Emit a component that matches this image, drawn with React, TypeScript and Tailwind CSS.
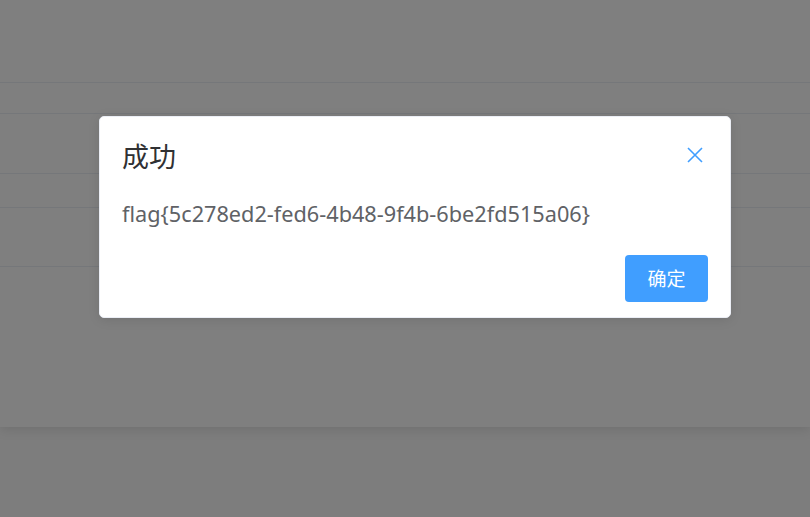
import React from "react";

export default function App() {
  const rows = [83, 31, 60, 34, 59];
  return (
    <div
      className="relative w-full h-[517px] overflow-hidden bg-[#fafafa]"
      style={{ fontFamily: '"Noto Sans", "Noto Sans CJK SC", sans-serif' }}
    >
      <div className="h-[427px] bg-white shadow-[0_2px_12px_rgba(0,0,0,0.12)] flex flex-col">
        {rows.map((h, i) => (
          <div key={i} className="border-b border-[#EBEEF5]" style={{ height: h }} />
        ))}
      </div>
      <div className="absolute inset-0 bg-black/50" />
      <div className="absolute left-[99px] top-[116px] w-[632px] h-[202px] bg-white rounded-[5px] border border-[#EBEEF5] shadow-[0_2px_12px_rgba(0,0,0,0.1)] flex flex-col pt-[21px] pl-[22px] pr-[22px] pb-[15px]">
        <div className="flex items-center justify-between h-[36px]">
          <span
            className="text-[27px] leading-[36px] text-[#303133]"
            style={{ fontFamily: '"Noto Sans CJK SC", sans-serif' }}
          >
            成功
          </span>
          <svg width="16" height="16" viewBox="0 0 16 16" className="mr-[5px] mt-[-2px]">
            <path d="M1 1 L15 15 M15 1 L1 15" stroke="#409EFF" strokeWidth="1.6" fill="none" />
          </svg>
        </div>
        <div className="mt-[26px] h-[28px] text-[21.7px] leading-[28px] text-[#606266]">
          flag{"{"}5c278ed2-fed6-4b48-9f4b-6be2fd515a06{"}"}
        </div>
        <div className="mt-[27px] flex justify-end">
          <button
            className="w-[83px] h-[47px] rounded-[4px] bg-[#409EFF] text-white text-[19px]"
            style={{ fontFamily: '"Noto Sans CJK SC", sans-serif' }}
          >
            确定
          </button>
        </div>
      </div>
    </div>
  );
}
